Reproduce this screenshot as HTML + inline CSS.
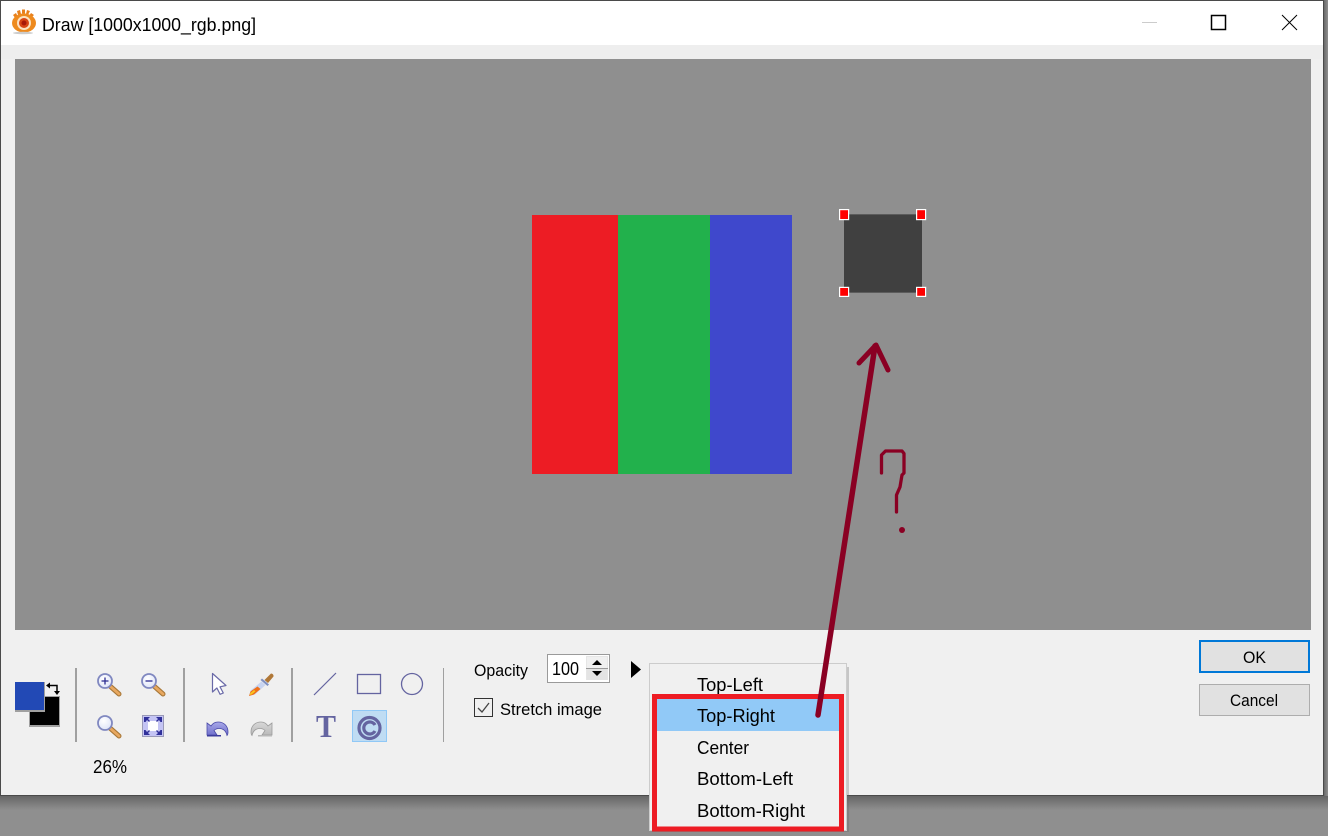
<!DOCTYPE html>
<html>
<head>
<meta charset="utf-8">
<style>
html,body{margin:0;padding:0;width:1328px;height:836px;overflow:hidden;background:#8f8f8f}
svg{display:block}
text{font-family:"Liberation Sans",sans-serif;fill:#000}
</style>
</head>
<body>
<svg width="1328" height="836" viewBox="0 0 1328 836" xmlns="http://www.w3.org/2000/svg">
<defs>
<linearGradient id="sb" x1="0" y1="0" x2="0" y2="1"><stop offset="0" stop-color="#666"/><stop offset="1" stop-color="#8f8f8f"/></linearGradient>
<linearGradient id="sr" x1="0" y1="0" x2="1" y2="0"><stop offset="0" stop-color="#6a6a6a"/><stop offset="1" stop-color="#8f8f8f"/></linearGradient>
<radialGradient id="ln" cx="0.4" cy="0.35" r="0.7"><stop offset="0" stop-color="#fff"/><stop offset="1" stop-color="#dde3f8"/></radialGradient>
<linearGradient id="und" x1="0" y1="0" x2="0" y2="1"><stop offset="0" stop-color="#a8a8e8"/><stop offset="1" stop-color="#7070cc"/></linearGradient>
<linearGradient id="red" x1="0" y1="0" x2="0" y2="1"><stop offset="0" stop-color="#d8d8d8"/><stop offset="1" stop-color="#b8b8b8"/></linearGradient>
</defs>

<!-- backdrop and window -->
<rect width="1328" height="836" fill="#8f8f8f"/>
<rect x="0" y="796" width="1328" height="14" fill="url(#sb)"/>
<rect x="1324" y="0" width="4" height="796" fill="url(#sr)"/>
<rect x="0" y="0" width="1324" height="796" fill="#4a4a4a"/>
<rect x="1" y="1" width="1322" height="794" fill="#f0f0f0"/>
<rect x="1" y="1" width="1322" height="44" fill="#fff"/>
<rect x="1" y="45" width="1322" height="14" fill="#eeeeee"/>

<!-- title icon -->
<g>
<g fill="#e8801c">
<path d="M13 15l3-2 2 4-2 2z"/><path d="M17 11l3-1 1 4-3 1z"/><path d="M22 9.500l3 0 0 4-3 0z"/><path d="M27 10l3 1-2 4-2-1z"/><path d="M31 13l3 2-3 3-2-2z"/>
</g>
<ellipse cx="24" cy="23" rx="12" ry="9.500" fill="#ee8a1e"/>
<circle cx="24" cy="23" r="7" fill="#fbe2c0"/>
<circle cx="24" cy="23" r="5" fill="#d84414"/>
<circle cx="24" cy="23" r="2.500" fill="#a81808"/>
<ellipse cx="23" cy="33" rx="10" ry="1.300" fill="#ccc"/>
</g>
<text x="42" y="31" font-size="18" textLength="214" lengthAdjust="spacingAndGlyphs">Draw [1000x1000_rgb.png]</text>

<!-- window buttons -->
<rect x="1142" y="22" width="15" height="1" fill="#ccc"/>
<rect x="1211.500" y="15.500" width="14" height="14" fill="none" stroke="#000" stroke-width="1.500"/>
<path d="M1282 15l15 15M1297 15l-15 15" stroke="#000" stroke-width="1" fill="none"/>

<!-- canvas -->
<rect x="15" y="59" width="1296" height="571" fill="#8f8f8f"/>
<rect x="532" y="215" width="86" height="259" fill="#ed1c24"/>
<rect x="618" y="215" width="92" height="259" fill="#22b14c"/>
<rect x="710" y="215" width="82" height="259" fill="#3f48cc"/>
<rect x="844" y="214" width="78" height="79" fill="#5c5c5c"/>
<rect x="844" y="215" width="78" height="77" fill="#404040"/>
<g fill="#f00" stroke="#fff" stroke-width="1.200">
<rect x="839.600" y="209.600" width="9" height="10"/>
<rect x="916.600" y="209.600" width="9" height="10"/>
<rect x="839.600" y="287.400" width="9" height="9"/>
<rect x="916.600" y="287.400" width="9" height="9"/>
</g>

<!-- separators -->
<g fill="#a0a0a0">
<rect x="75" y="668" width="2" height="74"/>
<rect x="183" y="668" width="2" height="74"/>
<rect x="291" y="668" width="2" height="74"/>
<rect x="443" y="668" width="1" height="74"/>
</g>

<!-- colour swatches -->
<rect x="29" y="696" width="31" height="31" fill="#a0a0a0"/>
<rect x="30" y="697" width="29" height="28" fill="#000"/>
<rect x="15" y="682" width="30" height="30" fill="#a0a0a0"/>
<rect x="15" y="682" width="29" height="28" fill="#2249b5"/>
<path d="M49 685.500h8v7" fill="none" stroke="#000" stroke-width="1.500"/>
<path d="M46 685.500l4-3v6z" fill="#000"/>
<path d="M54 691h6l-3 4z" fill="#000"/>

<!-- zoom in -->
<g>
<path d="M110.500 686.500l8.500 7.500" stroke="#a87838" stroke-width="5" stroke-linecap="round"/>
<path d="M110.500 686.500l8.500 7.500" stroke="#e8a860" stroke-width="2.800" stroke-linecap="round"/>
<circle cx="105" cy="681" r="7" fill="url(#ln)" stroke="#8088c0" stroke-width="1.800"/>
<path d="M101.500 681h7M105 677.500v7" stroke="#2a2a90" stroke-width="1.300"/>
</g>
<!-- zoom out -->
<g>
<path d="M154.500 686.500l8.500 7.500" stroke="#a87838" stroke-width="5" stroke-linecap="round"/>
<path d="M154.500 686.500l8.500 7.500" stroke="#e8a860" stroke-width="2.800" stroke-linecap="round"/>
<circle cx="149" cy="681" r="7" fill="url(#ln)" stroke="#8088c0" stroke-width="1.800"/>
<path d="M145.500 681h7" stroke="#2a2a90" stroke-width="1.300"/>
</g>
<!-- zoom 1:1 -->
<g>
<path d="M110.500 728.500l8.500 7.500" stroke="#a87838" stroke-width="5" stroke-linecap="round"/>
<path d="M110.500 728.500l8.500 7.500" stroke="#e8a860" stroke-width="2.800" stroke-linecap="round"/>
<circle cx="105" cy="723" r="7" fill="url(#ln)" stroke="#8088c0" stroke-width="1.800"/>
</g>
<!-- fit -->
<g>
<rect x="142.500" y="715.500" width="21" height="21" fill="#c4c4f4" stroke="#9a9ab8"/>
<rect x="148" y="721" width="10" height="10" fill="#fff"/>
<path d="M144 717h6l-2 2 2 2-1 1-2-2-1.500 2h-1.500zM162 717h-6l2 2-2 2 1 1 2-2 1.500 2h1.500zM144 735h6l-2-2 2-2-1-1-2 2-1.500-2h-1.500zM162 735h-6l2-2-2-2 1-1 2 2 1.500-2h1.500z" fill="#30309a"/>
</g>

<!-- pointer -->
<path d="M212.500 673.500l13.500 12-6 1.300 3.300 6.200-3.200 1.300-3.200-6.300-4.400 4z" fill="#fff" stroke="#6a6aa8" stroke-width="1.200" stroke-linejoin="round"/>
<!-- eyedropper -->
<g>
<path d="M264.500 680l6.500-6.500a2.500 2.500 0 0 1 2.500 3l-5.500 6.500z" fill="#b07838"/>
<path d="M262 678.500l7 6-1.500 1.500-7-6z" fill="#8090c0"/>
<path d="M261.500 681.500l4 3.500-10.500 9.500-6 1.500 1.500-5.500z" fill="#c8d4f0"/>
<path d="M257.500 686.500l3 2.500-6.500 5.500-5 1.500 1.500-4.500z" fill="#f07018"/>
<path d="M254 690l1.500 1.300-4 3.200-1.800.5.500-1.800z" fill="#f8c820"/>
</g>
<!-- undo -->
<path d="M207 723l4 3c2-3 4.500-4 7-4 6 0 10 4 10 10 0 1.500-.5 3-1 3.500-1-4.500-4-7-8-7-2 0-3.500.5-5 2l3 4.500h-10z" fill="url(#und)" stroke="#4a4aa8" stroke-width="0.800"/>
<rect x="207" y="735" width="14" height="1.500" fill="#3c3c9c"/>
<!-- redo -->
<path d="M272 723l-4 3c-2-3-4.500-4-7-4-6 0-10 4-10 10 0 1.500.5 3 1 3.500 1-4.500 4-7 8-7 2 0 3.500.5 5 2l-3 4.500h10z" fill="url(#red)" stroke="#9c9c9c" stroke-width="0.800"/>
<rect x="258" y="735" width="14" height="1.500" fill="#b8b8b8"/>

<!-- drawing tools -->
<path d="M314 695l22-22" stroke="#6464a0" stroke-width="1.200" fill="none"/>
<rect x="357.500" y="674.500" width="23" height="19" fill="none" stroke="#6464a0" stroke-width="1.300"/>
<circle cx="412" cy="684" r="10.500" fill="none" stroke="#6464a0" stroke-width="1.300"/>
<text x="316" y="737" font-size="32" font-weight="700" style='font-family:"Liberation Serif",serif;fill:#6464a0' textLength="20" lengthAdjust="spacingAndGlyphs">T</text>
<rect x="352.500" y="710.500" width="34" height="31" fill="#bfdcf3" stroke="#90c8f6"/>
<circle cx="369.500" cy="728" r="10.500" fill="none" stroke="#6464a0" stroke-width="3.200"/>
<path d="M375 725a6 6 0 1 0 0 6" fill="none" stroke="#6464a0" stroke-width="3.200"/>

<text x="93" y="773" font-size="18" textLength="34" lengthAdjust="spacingAndGlyphs">26%</text>

<!-- opacity -->
<text x="474" y="676" font-size="17" textLength="54" lengthAdjust="spacingAndGlyphs">Opacity</text>
<rect x="547.500" y="654.500" width="62" height="28" fill="#fff" stroke="#9a9a9a"/>
<text x="552" y="675" font-size="18" textLength="27" lengthAdjust="spacingAndGlyphs">100</text>
<rect x="586" y="656" width="22" height="24" fill="#e6e6e6"/>
<rect x="587" y="657" width="20" height="11" fill="#f0f0f0"/>
<rect x="587" y="669" width="20" height="11" fill="#e4e4e4"/>
<rect x="586" y="668" width="22" height="1" fill="#9a9a9a"/>
<path d="M592 665l5-5 5 5z" fill="#000"/>
<path d="M592 671l5 5 5-5z" fill="#000"/>
<path d="M631 661l10 8.500-10 8.500z" fill="#000"/>

<!-- stretch -->
<rect x="474.500" y="698.500" width="18" height="18" fill="#f0f0f0" stroke="#333"/>
<path d="M478 708l4 4 7-9" fill="none" stroke="#444" stroke-width="1.300"/>
<text x="500" y="715" font-size="17" textLength="102" lengthAdjust="spacingAndGlyphs">Stretch image</text>

<!-- menu -->
<rect x="652" y="667" width="197" height="165" fill="#666" opacity="0.3"/>
<rect x="649.500" y="663.500" width="197" height="167" fill="#f0f0f0" stroke="#ccc"/>
<rect x="657" y="699" width="182" height="32" fill="#91c9f7"/>
<text x="697" y="691" font-size="18" textLength="66" lengthAdjust="spacingAndGlyphs">Top-Left</text>
<text x="697" y="722" font-size="18" textLength="78" lengthAdjust="spacingAndGlyphs">Top-Right</text>
<text x="697" y="754" font-size="18" textLength="52" lengthAdjust="spacingAndGlyphs">Center</text>
<text x="697" y="785" font-size="18" textLength="96" lengthAdjust="spacingAndGlyphs">Bottom-Left</text>
<text x="697" y="817" font-size="18" textLength="108" lengthAdjust="spacingAndGlyphs">Bottom-Right</text>
<rect x="654.500" y="696.500" width="187" height="132.500" fill="none" stroke="#ed1c24" stroke-width="5"/>

<!-- buttons -->
<rect x="1200" y="641" width="109" height="31" fill="#e1e1e1" stroke="#0078d7" stroke-width="2"/>
<text x="1243" y="663" font-size="17" textLength="23" lengthAdjust="spacingAndGlyphs">OK</text>
<rect x="1199.500" y="684.500" width="110" height="31" fill="#e1e1e1" stroke="#adadad"/>
<text x="1230" y="706" font-size="17" textLength="48" lengthAdjust="spacingAndGlyphs">Cancel</text>

<!-- annotations -->
<g fill="none" stroke="#8a0023" stroke-linecap="round" stroke-linejoin="round">
<path d="M818 715L875 346" stroke-width="5.500"/>
<path d="M859 363L876 345L888 370" stroke-width="5"/>
<path d="M881.500 473V455L885.500 451H902L904 453.500V473L902 475L900 487L896.500 495V512" stroke-width="3.300"/>
</g>
<circle cx="902" cy="530" r="3" fill="#8a0023"/>
</svg>
</body>
</html>
